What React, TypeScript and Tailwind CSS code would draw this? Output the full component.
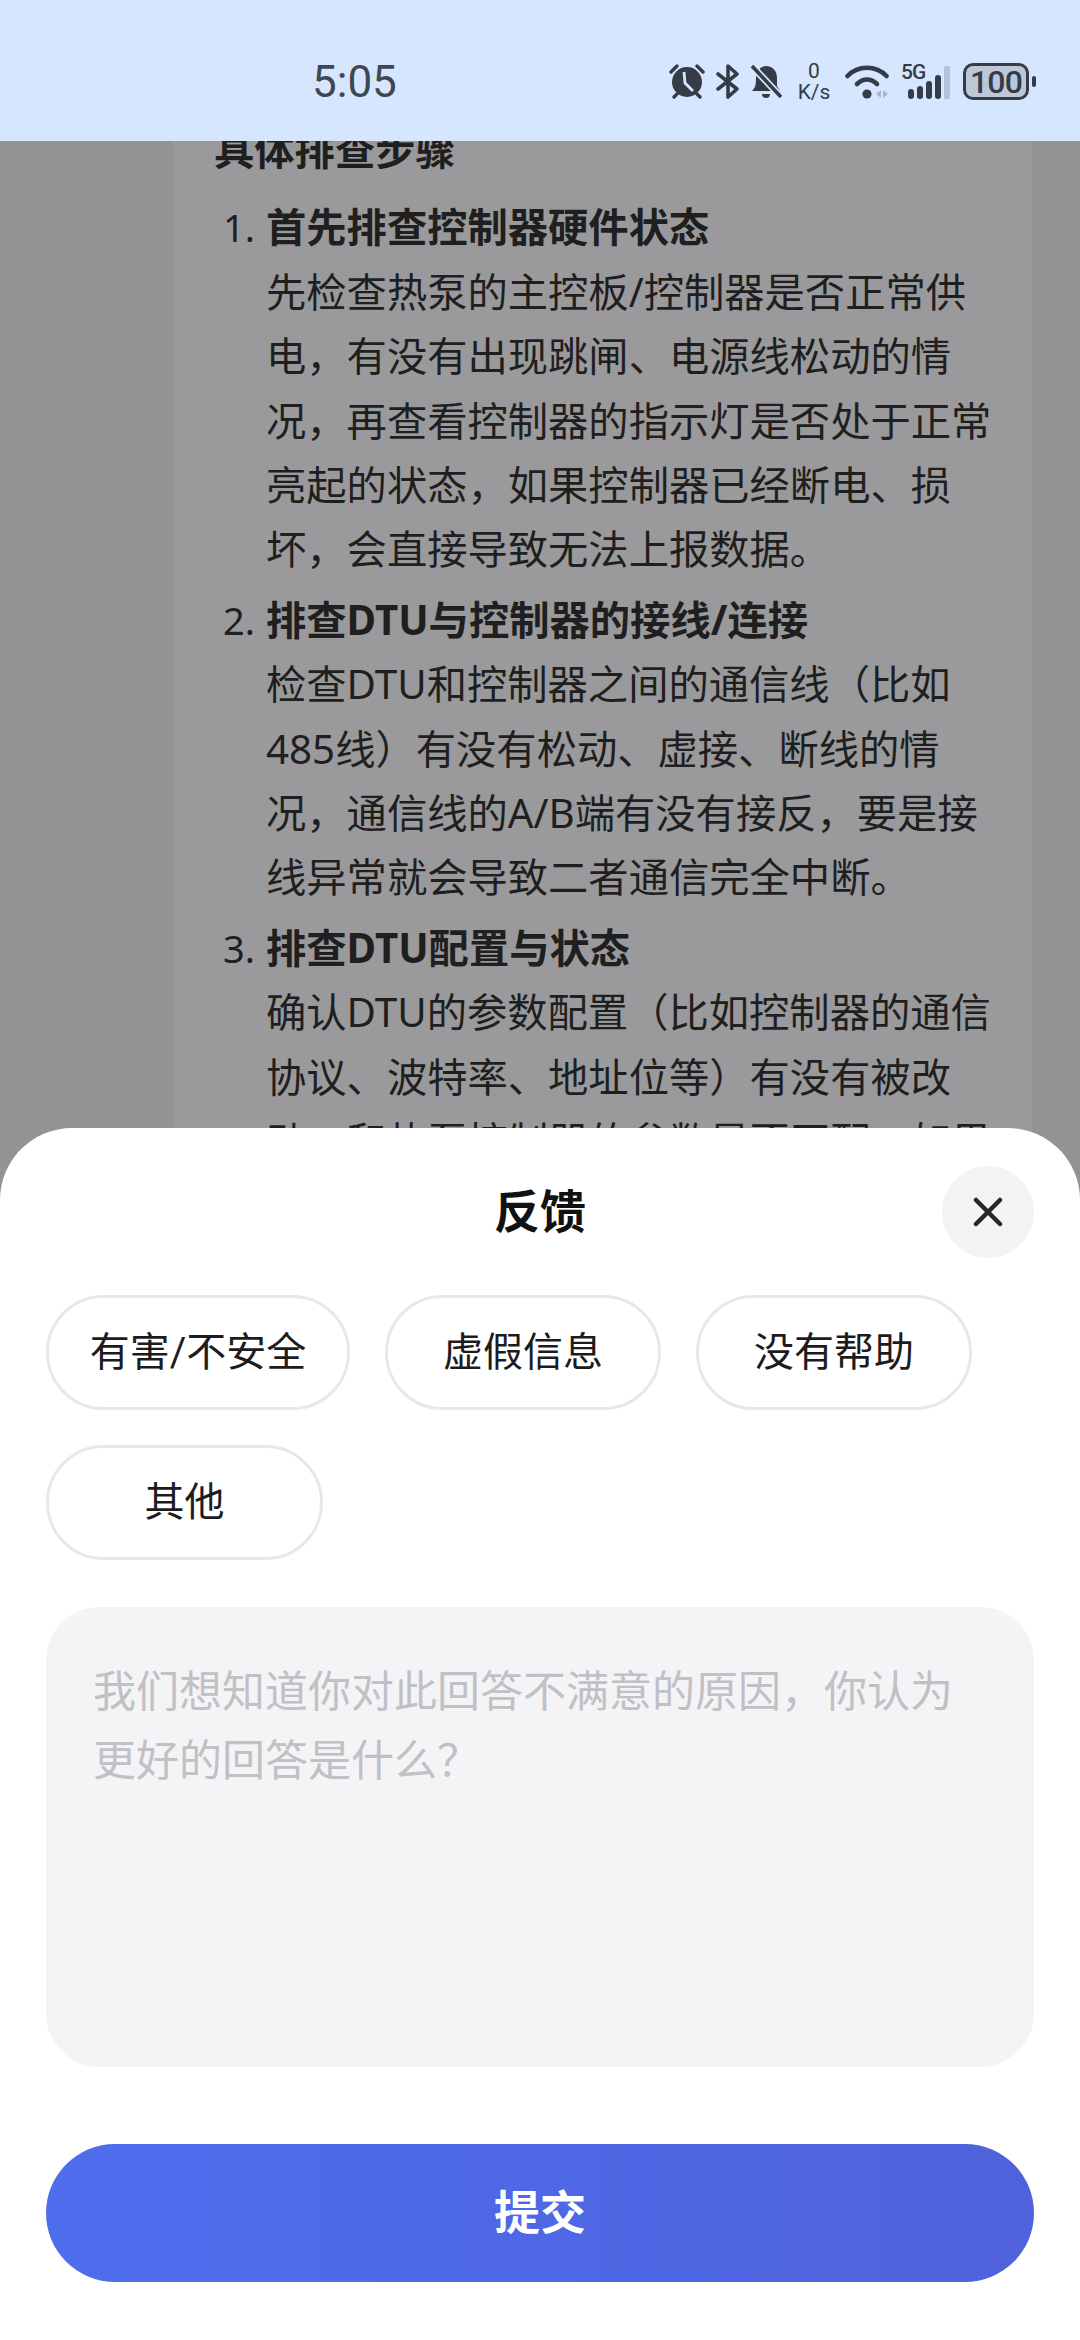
const sections = [
  {
    num: "1.",
    title: "首先排查控制器硬件状态",
    body: "先检查热泵的主控板/控制器是否正常供电，有没有出现跳闸、电源线松动的情况，再查看控制器的指示灯是否处于正常亮起的状态，如果控制器已经断电、损坏，会直接导致无法上报数据。",
  },
  {
    num: "2.",
    title: "排查DTU与控制器的接线/连接",
    body: "检查DTU和控制器之间的通信线（比如485线）有没有松动、虚接、断线的情况，通信线的A/B端有没有接反，要是接线异常就会导致二者通信完全中断。",
  },
  {
    num: "3.",
    title: "排查DTU配置与状态",
    body: "确认DTU的参数配置（比如控制器的通信协议、波特率、地址位等）有没有被改动，和热泵控制器的参数是否匹配，如果",
  },
];

const StatusIcons = () => (
  <div className="ml-auto flex items-center text-[#353c48]">
    {/* Alarm */}
    <svg width="36" height="35" viewBox="0 0 36 35">
      <circle cx="18" cy="18" r="15" fill="currentColor" />
      <path d="M15 8l1 11 8 8" stroke="#d6e6fe" strokeWidth="2.8" fill="none" />
      <path d="M2 8l6-6M34 8l-6-6M5 33l3-3M31 33l-3-3" stroke="currentColor" strokeWidth="3.4" strokeLinecap="round" />
    </svg>
    {/* Bluetooth */}
    <svg width="24" height="35" viewBox="0 0 24 35" fill="none" className="ml-[11px]">
      <path d="M2 10l19 15-9 8V2l9 8L2 25" stroke="currentColor" strokeWidth="3.6" strokeLinejoin="round" strokeLinecap="round" />
    </svg>
    {/* Bell off */}
    <svg width="32" height="35" viewBox="0 0 32 35" className="ml-[10px]">
      <path d="M16 2c7 0 11 5 11 12v8l3 5H2c3-3 4-6 4-12 0-7 4-13 10-13z" fill="currentColor" />
      <path d="M12 30h8c0 3-2 4-4 4s-4-1-4-4z" fill="currentColor" />
      <path d="M1 1l30 32" stroke="#d6e6fe" strokeWidth="7" />
      <path d="M2 2l29 31" stroke="currentColor" strokeWidth="3.6" />
    </svg>
    {/* Network speed */}
    <div className="ml-[15px] flex w-[34px] flex-col items-center font-['Roboto',sans-serif] text-[21px] leading-[21px]">
      <span>0</span>
      <span>K/s</span>
    </div>
    {/* Wifi */}
    <svg width="44" height="35" viewBox="0 0 44 35" fill="none" className="ml-[14px]">
      <path d="M2.5 12C13 1 31 1 41.5 12" stroke="currentColor" strokeWidth="4.6" strokeLinecap="round" />
      <path d="M12 20c6-6 14-6 20 0" stroke="currentColor" strokeWidth="4.6" strokeLinecap="round" />
      <circle cx="22" cy="30" r="4.6" fill="currentColor" />
      <path d="M36 26v8l-5-4zM38 26v8l5-4z" fill="#a9b5c4" />
    </svg>
    {/* 5G signal */}
    <div className="relative ml-[12px] h-[35px] w-[50px]">
      <span className="absolute left-0 top-[-3px] font-['Roboto',sans-serif] text-[21px] font-medium leading-[22px] tracking-tighter">5G</span>
      <div className="absolute bottom-0 left-[7px] flex items-end gap-[3px]">
        <div className="h-[10px] w-[6px] rounded-full bg-[#353c48]" />
        <div className="h-[13px] w-[6px] rounded-full bg-[#353c48]" />
        <div className="h-[18px] w-[6px] rounded-full bg-[#353c48]" />
        <div className="h-[24px] w-[6px] rounded-full bg-[#353c48]" />
        <div className="h-[33px] w-[6px] rounded-[1px] bg-[#b6c3d6]" />
      </div>
    </div>
    {/* Battery */}
    <div className="ml-[12px] flex items-center">
      <div className="flex h-[37px] w-[66px] items-center justify-center rounded-[10px] border-[3px] border-[#353c48] bg-[#bcc8d8] font-['Roboto',sans-serif] text-[32px] font-medium leading-none tracking-tight">
        100
      </div>
      <div className="ml-[3px] h-[11px] w-[4px] rounded-full bg-[#353c48]" />
    </div>
  </div>
);

const chips = ["有害/不安全", "虚假信息", "没有帮助", "其他"];
const chipWidths = ["w-[304px]", "w-[276px]", "w-[276px]", "w-[277px]"];

export default function App() {
  return (
    <div className="relative flex h-[2340px] w-[1080px] flex-col overflow-hidden bg-[#929395] font-['Roboto','Noto_Sans_CJK_SC',sans-serif]">
      <header className="z-10 flex h-[141px] shrink-0 items-center bg-[#d6e6fe] pl-[312px] pr-[44px] pt-[22px]">
        <span className="text-[44px] leading-none text-[#3f4753]">5:05</span>
        <StatusIcons />
      </header>

      {/* Chat answer behind the sheet */}
      <main className="min-h-0 flex-1 overflow-hidden">
        <div className="ml-[174px] mr-[48px] mt-[-23px] h-[1200px] bg-[#9a9a9c] pl-[40px] font-['Noto_Sans','Noto_Sans_CJK_SC',sans-serif] text-[40.3px] leading-[64.4px] text-[#1f1f20]">
          <h3 className="font-bold">具体排查步骤</h3>
          <ol className="mt-[13px] flex flex-col gap-[6px]">
            {sections.map((s) => (
              <li key={s.num} className="flex">
                <span className="ml-[9px] w-[43px] shrink-0 text-[38px]">{s.num}</span>
                <div className="w-[730px]">
                  <div className="font-bold">{s.title}</div>
                  <p>{s.body}</p>
                </div>
              </li>
            ))}
          </ol>
        </div>
      </main>

      {/* Feedback bottom sheet */}
      <section className="absolute inset-x-0 top-[1128px] bottom-0 z-20 flex flex-col rounded-t-[72px] bg-white px-[46px] pt-[38px]">
        <div className="relative flex h-[92px] shrink-0 items-center justify-center">
          <h2 className="text-[46px] font-bold leading-none text-[#111]">反馈</h2>
          <button className="absolute right-0 top-0 flex h-[92px] w-[92px] items-center justify-center rounded-full bg-[#f3f3f4]">
            <svg width="30" height="30" viewBox="0 0 30 30" fill="none">
              <path d="M3 3l24 24M27 3L3 27" stroke="#26272b" strokeWidth="4.5" strokeLinecap="round" />
            </svg>
          </button>
        </div>
        <div className="mt-[37px] flex flex-wrap gap-x-[35px] gap-y-[35px]">
          {chips.map((c, i) => (
            <button
              key={c}
              className={`h-[115px] ${chipWidths[i]} rounded-full border-[3px] border-[#e8e8ea] text-[40px] leading-none text-[#1c1c1e]`}
            >
              {c}
            </button>
          ))}
        </div>
        <div className="mt-[47px] h-[460px] shrink-0 rounded-[54px] bg-[#f4f4f6] pl-[47px] pr-[40px] pt-[51px] text-[43px] leading-[69px] text-[#c0c0c5]">
          我们想知道你对此回答不满意的原因，你认为更好的回答是什么？
        </div>
        <button className="mt-[77px] h-[138px] shrink-0 rounded-full bg-gradient-to-r from-[#4e6eee] to-[#4f62dc] text-[46px] font-bold leading-none text-white">
          提交
        </button>
      </section>
    </div>
  );
}
